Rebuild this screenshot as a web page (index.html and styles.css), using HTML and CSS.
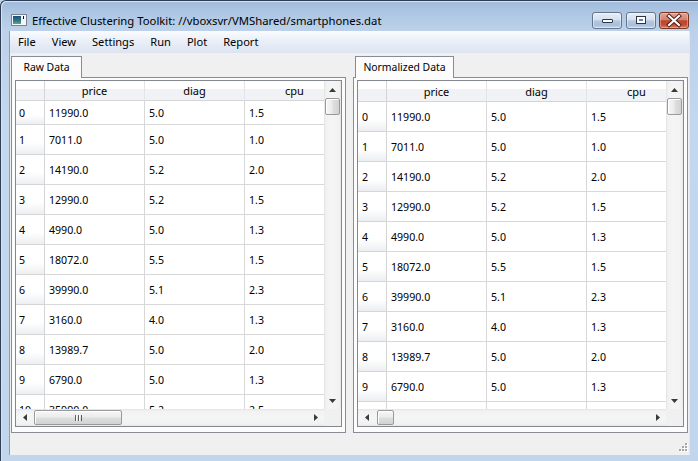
FILE: index.html
```html
<!DOCTYPE html>
<html>
<head>
<meta charset="utf-8">
<title>Effective Clustering Toolkit</title>
<link rel="stylesheet" href="styles.css">
</head>
<body>
<div class="window">
  <div class="titlebar">
    <svg class="app-icon" width="16" height="12" viewBox="0 0 16 12">
      <defs>
        <linearGradient id="ig" x1="0" y1="0" x2="0" y2="1">
          <stop offset="0" stop-color="#1d4f7a"/>
          <stop offset="0.6" stop-color="#2f7a88"/>
          <stop offset="1" stop-color="#6fa46a"/>
        </linearGradient>
      </defs>
      <rect x="0.5" y="0.5" width="15" height="11" fill="#f4f6f8" stroke="#7a8491"/>
      <rect x="2" y="2" width="8" height="8" fill="url(#ig)"/>
      <rect x="12" y="2" width="1" height="3" fill="#111"/>
    </svg>
    <span class="title">Effective Clustering Toolkit: //vboxsvr/VMShared/smartphones.dat</span>
    <div class="caption-buttons">
      <div class="cbtn cbtn-min">
        <svg width="28" height="15" viewBox="0 0 28 15"><rect x="9.5" y="6.5" width="10" height="3" rx="0.5" fill="#fff" stroke="#2c3545"/></svg>
      </div>
      <div class="cbtn cbtn-max">
        <svg width="28" height="15" viewBox="0 0 28 15"><rect x="9" y="3" width="10" height="8" fill="#2c3545"/><rect x="10" y="4" width="8" height="6" fill="#fff"/><rect x="12" y="6" width="4" height="2" fill="#6c84a4"/></svg>
      </div>
      <div class="cbtn cbtn-close">
        <svg width="28" height="15" viewBox="0 0 28 15"><path d="M9 3 L19 12 M19 3 L9 12" stroke="#4a1a12" stroke-width="4" stroke-linecap="square"/><path d="M9 3 L19 12 M19 3 L9 12" stroke="#fff" stroke-width="2.2" stroke-linecap="square"/></svg>
      </div>
    </div>
  </div>

  <div class="client">
    <div class="menubar">
      <span class="menu-item">File</span>
      <span class="menu-item">View</span>
      <span class="menu-item">Settings</span>
      <span class="menu-item">Run</span>
      <span class="menu-item">Plot</span>
      <span class="menu-item">Report</span>
    </div>

    <div class="panes">
      <!-- Raw Data -->
      <div class="tabwidget tw-raw">
        <div class="tabbar"><div class="tab">Raw Data</div></div>
        <div class="pane">
          <div class="tableview">
            <div class="viewport">
              <div class="row hdr"><div class="vh"></div><div class="hc">price</div><div class="hc">diag</div><div class="hc">cpu</div></div>
              <div class="row r0"><div class="vh">0</div><div class="cell">11990.0</div><div class="cell">5.0</div><div class="cell">1.5</div></div>
              <div class="row"><div class="vh">1</div><div class="cell">7011.0</div><div class="cell">5.0</div><div class="cell">1.0</div></div>
              <div class="row"><div class="vh">2</div><div class="cell">14190.0</div><div class="cell">5.2</div><div class="cell">2.0</div></div>
              <div class="row"><div class="vh">3</div><div class="cell">12990.0</div><div class="cell">5.2</div><div class="cell">1.5</div></div>
              <div class="row"><div class="vh">4</div><div class="cell">4990.0</div><div class="cell">5.0</div><div class="cell">1.3</div></div>
              <div class="row"><div class="vh">5</div><div class="cell">18072.0</div><div class="cell">5.5</div><div class="cell">1.5</div></div>
              <div class="row"><div class="vh">6</div><div class="cell">39990.0</div><div class="cell">5.1</div><div class="cell">2.3</div></div>
              <div class="row"><div class="vh">7</div><div class="cell">3160.0</div><div class="cell">4.0</div><div class="cell">1.3</div></div>
              <div class="row"><div class="vh">8</div><div class="cell">13989.7</div><div class="cell">5.0</div><div class="cell">2.0</div></div>
              <div class="row"><div class="vh">9</div><div class="cell">6790.0</div><div class="cell">5.0</div><div class="cell">1.3</div></div>
              <div class="row"><div class="vh">10</div><div class="cell">35990.0</div><div class="cell">5.2</div><div class="cell">2.5</div></div>
            </div>
            <div class="vscroll">
              <div class="sb-btn"><svg width="7" height="4" viewBox="0 0 7 4"><path d="M3.5 0 L7 4 L0 4 Z" fill="#3a3a3a"/></svg></div>
              <div class="vtrack"><div class="vthumb"></div></div>
              <div class="sb-btn"><svg width="7" height="4" viewBox="0 0 7 4"><path d="M0 0 L7 0 L3.5 4 Z" fill="#3a3a3a"/></svg></div>
            </div>
            <div class="hscroll">
              <div class="sb-btn"><svg width="4" height="7" viewBox="0 0 4 7"><path d="M0 3.5 L4 0 L4 7 Z" fill="#3a3a3a"/></svg></div>
              <div class="htrack"><div class="hthumb hthumb-wide"><span class="grip-lines"></span></div></div>
              <div class="sb-btn"><svg width="4" height="7" viewBox="0 0 4 7"><path d="M0 0 L4 3.5 L0 7 Z" fill="#3a3a3a"/></svg></div>
            </div>
            <div class="sb-corner"></div>
          </div>
        </div>
      </div>

      <!-- Normalized Data -->
      <div class="tabwidget tw-norm">
        <div class="tabbar"><div class="tab">Normalized Data</div></div>
        <div class="pane">
          <div class="tableview">
            <div class="viewport">
              <div class="row hdr"><div class="vh"></div><div class="hc">price</div><div class="hc">diag</div><div class="hc">cpu</div></div>
              <div class="row r0"><div class="vh">0</div><div class="cell">11990.0</div><div class="cell">5.0</div><div class="cell">1.5</div></div>
              <div class="row"><div class="vh">1</div><div class="cell">7011.0</div><div class="cell">5.0</div><div class="cell">1.0</div></div>
              <div class="row"><div class="vh">2</div><div class="cell">14190.0</div><div class="cell">5.2</div><div class="cell">2.0</div></div>
              <div class="row"><div class="vh">3</div><div class="cell">12990.0</div><div class="cell">5.2</div><div class="cell">1.5</div></div>
              <div class="row"><div class="vh">4</div><div class="cell">4990.0</div><div class="cell">5.0</div><div class="cell">1.3</div></div>
              <div class="row"><div class="vh">5</div><div class="cell">18072.0</div><div class="cell">5.5</div><div class="cell">1.5</div></div>
              <div class="row"><div class="vh">6</div><div class="cell">39990.0</div><div class="cell">5.1</div><div class="cell">2.3</div></div>
              <div class="row"><div class="vh">7</div><div class="cell">3160.0</div><div class="cell">4.0</div><div class="cell">1.3</div></div>
              <div class="row"><div class="vh">8</div><div class="cell">13989.7</div><div class="cell">5.0</div><div class="cell">2.0</div></div>
              <div class="row"><div class="vh">9</div><div class="cell">6790.0</div><div class="cell">5.0</div><div class="cell">1.3</div></div>
              <div class="row"><div class="vh">10</div><div class="cell">35990.0</div><div class="cell">5.2</div><div class="cell">2.5</div></div>
            </div>
            <div class="vscroll">
              <div class="sb-btn"><svg width="7" height="4" viewBox="0 0 7 4"><path d="M3.5 0 L7 4 L0 4 Z" fill="#3a3a3a"/></svg></div>
              <div class="vtrack"><div class="vthumb"></div></div>
              <div class="sb-btn"><svg width="7" height="4" viewBox="0 0 7 4"><path d="M0 0 L7 0 L3.5 4 Z" fill="#3a3a3a"/></svg></div>
            </div>
            <div class="hscroll">
              <div class="sb-btn"><svg width="4" height="7" viewBox="0 0 4 7"><path d="M0 3.5 L4 0 L4 7 Z" fill="#3a3a3a"/></svg></div>
              <div class="htrack"><div class="hthumb hthumb-narrow"></div></div>
              <div class="sb-btn"><svg width="4" height="7" viewBox="0 0 4 7"><path d="M0 0 L4 3.5 L0 7 Z" fill="#3a3a3a"/></svg></div>
            </div>
            <div class="sb-corner"></div>
          </div>
        </div>
      </div>
    </div>

    <div class="statusbar">
      <svg class="size-grip" width="12" height="12" viewBox="0 0 12 12">
        <g fill="#fff">
          <rect x="9" y="1" width="2" height="2"/>
          <rect x="6" y="4" width="2" height="2"/><rect x="9" y="4" width="2" height="2"/>
          <rect x="3" y="7" width="2" height="2"/><rect x="6" y="7" width="2" height="2"/><rect x="9" y="7" width="2" height="2"/>
        </g>
        <g fill="#a7a7a7">
          <rect x="8" y="0" width="2" height="2"/>
          <rect x="5" y="3" width="2" height="2"/><rect x="8" y="3" width="2" height="2"/>
          <rect x="2" y="6" width="2" height="2"/><rect x="5" y="6" width="2" height="2"/><rect x="8" y="6" width="2" height="2"/>
        </g>
      </svg>
    </div>
  </div>
</div>
</body>
</html>
```

FILE: styles.css
```css
* { box-sizing: border-box; margin: 0; padding: 0; }

html, body {
  width: 698px;
  height: 461px;
  overflow: hidden;
}

body {
  font-family: "Noto Sans", "Open Sans", sans-serif;
  font-size: 11px;
  color: #000;
  background: #c1d5ed;
}

/* ---------- window frame ---------- */
.window {
  width: 698px;
  height: 461px;
  display: flex;
  flex-direction: column;
  border-top: 1px solid #2e3d52;
  border-left: 1px solid #2e3d52;
  border-top-left-radius: 6px;
  padding: 0 8px 6px 8px;
  background: linear-gradient(to bottom, #a0bbdc 0px, #b0c8e4 14px, #bdd2ea 30px, #c3d7ee 120px, #c1d5ed 100%);
  box-shadow: inset 1px 1px 0 #d6e3f2;
}

.titlebar {
  height: 30px;
  display: flex;
  align-items: flex-start;
  padding-top: 11px;
}

.app-icon {
  flex: none;
  margin: 2px 0 0 2px;
}

.title {
  margin-left: 5px;
  font-size: 11.3px;
  line-height: 17px;
  white-space: nowrap;
}

.caption-buttons {
  margin-left: auto;
  margin-right: 1px;
  display: flex;
}

.cbtn {
  width: 30px;
  height: 17px;
  border: 1px solid #65758d;
  border-radius: 3px;
  background: linear-gradient(to bottom, #e6edf6 0%, #d5e1f0 45%, #b5c8e1 52%, #a9bedb 80%, #c3d5ec 100%);
  box-shadow: inset 0 0 0 1px rgba(255,255,255,0.45);
  display: flex;
}

.cbtn-max { margin-left: 4px; }

.cbtn-close {
  margin-left: 3px;
  border-color: #7a3529;
  background: linear-gradient(to bottom, #e3a494 0%, #d5826e 45%, #c0432c 52%, #c44d33 78%, #d9835a 100%);
  box-shadow: inset 0 0 0 1px rgba(255,220,210,0.4);
}

/* ---------- client area ---------- */
.client {
  flex: 1;
  display: flex;
  flex-direction: column;
  background: #f0f0f0;
  border-left: 1px solid #8d9db3;
  border-right: 1px solid #dfe8f3;
}

.menubar {
  height: 22px;
  flex: none;
  display: flex;
  align-items: center;
  background: linear-gradient(to bottom, #fbfcfe 0%, #edf1f9 35%, #dce4f1 100%);
  font-size: 11.1px;
}

.menu-item {
  padding: 0 8px;
  line-height: 22px;
}

.panes {
  display: grid;
  grid-template-columns: 335px 335px;
  column-gap: 7px;
  padding: 3px 1px 0 1px;
}

.tabbar {
  height: 21px;
  display: flex;
}

.tab {
  height: 22px;
  border: 1px solid #898c95;
  border-bottom: none;
  background: #fcfcfc;
  font-size: 10.4px;
  line-height: 20px;
  text-align: center;
  position: relative;
  z-index: 1;
}

.tw-raw .tab { width: 71px; }
.tw-norm .tab { width: 99px; margin-left: 2px; }

.pane {
  height: 356px;
  border: 1px solid #898c95;
  background: #fcfcfc;
  padding: 2px 3px 5px 3px;
}

/* ---------- table view ---------- */
.tableview {
  height: 347px;
  border: 1px solid #828790;
  background: #fff;
  display: grid;
  grid-template-columns: 308px 17px;
  grid-template-rows: 328px 17px;
}

.viewport {
  overflow: hidden;
}

.row {
  display: flex;
  height: 30px;
}

.row.hdr { height: 20px; }
.tw-norm .row.hdr { height: 21px; }
.tw-raw .row.r0 { height: 24px; }

.vh {
  flex: none;
  width: 29px;
  padding-left: 3px;
  display: flex;
  align-items: center;
  border-right: 1px solid #d5d5d5;
  border-bottom: 1px solid #d5d5d5;
  background: linear-gradient(to bottom, #ffffff 0%, #ffffff 60%, #eceef1 100%);
  font-size: 10.6px;
}

.tw-norm .vh { padding-left: 4px; }

.hc {
  flex: none;
  width: 100px;
  display: flex;
  align-items: center;
  justify-content: center;
  border-right: 1px solid #e1e4e9;
  border-bottom: 1px solid #d5d5d5;
  font-size: 11px;
}

.hdr .vh,
.hc {
  background: linear-gradient(to bottom, #ffffff 0%, #ffffff 40%, #f1f2f5 40%, #f1f2f5 100%);
}

.cell {
  flex: none;
  width: 100px;
  padding-left: 4px;
  display: flex;
  align-items: center;
  border-right: 1px solid #d8d8d8;
  border-bottom: 1px solid #d8d8d8;
  font-size: 10.6px;
}

/* ---------- scroll bars ---------- */
.vscroll {
  grid-row: 1;
  grid-column: 2;
  display: flex;
  flex-direction: column;
  background: linear-gradient(to right, #e3e3e3 0, #f2f2f2 2px, #f5f5f5 8px, #f2f2f2 15px, #e6e6e6 17px);
}

.hscroll {
  grid-row: 2;
  grid-column: 1;
  display: flex;
  background: linear-gradient(to bottom, #e3e3e3 0, #f2f2f2 2px, #f5f5f5 8px, #f2f2f2 15px, #e6e6e6 17px);
}

.sb-btn {
  flex: none;
  width: 17px;
  height: 17px;
  display: flex;
  align-items: center;
  justify-content: center;
}

.vtrack {
  flex: 1;
  display: flex;
  flex-direction: column;
  align-items: center;
}

.vthumb {
  width: 15px;
  height: 17px;
  border: 1px solid #9a9a9a;
  border-radius: 2px;
  background: linear-gradient(to right, #f6f6f6 0%, #ececec 45%, #dedede 55%, #d2d2d2 100%);
  box-shadow: inset 1px 1px 0 #fff;
}

.htrack {
  flex: 1;
  display: flex;
  align-items: center;
  padding-left: 1px;
}

.hthumb {
  height: 15px;
  border: 1px solid #9a9a9a;
  border-radius: 2px;
  background: linear-gradient(to bottom, #f6f6f6 0%, #ececec 45%, #dedede 55%, #d2d2d2 100%);
  box-shadow: inset 1px 1px 0 #fff;
  display: flex;
  align-items: center;
  justify-content: center;
}

.hthumb-wide { width: 88px; }
.hthumb-narrow { width: 17px; margin-left: 1px; }

.grip-lines {
  width: 7px;
  height: 6px;
  background: repeating-linear-gradient(to right, #5c5c5c 0, #5c5c5c 1px, #fafafa 1px, #fafafa 2px, transparent 2px, transparent 3px);
}

.sb-corner {
  grid-row: 2;
  grid-column: 2;
  background: #f0f0f0;
}

/* ---------- status bar ---------- */
.statusbar {
  flex: 1;
  display: flex;
  justify-content: flex-end;
  align-items: flex-end;
}
```
